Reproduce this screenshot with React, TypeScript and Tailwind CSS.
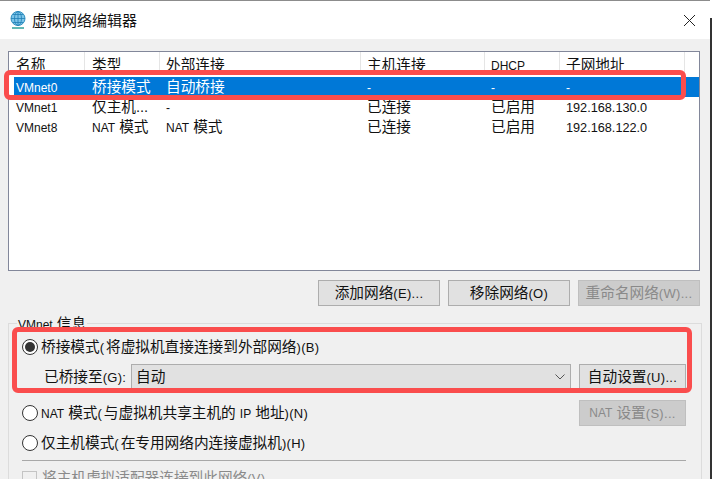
import type { ReactNode } from 'react';

const font = 'font-["Liberation_Sans","Noto_Sans_CJK_SC",sans-serif]';

// latin runs sit smaller than the CJK text, same as the native dialog
function L({ children }: { children: ReactNode }) {
  return <span className="text-[12px]">{children}</span>;
}

// mnemonic suffixes like (B) or (E)... run a bit wider
function Q({ children }: { children: ReactNode }) {
  return <span className="text-[13px] tracking-[0.3px]">{children}</span>;
}

// opening paren of the radio labels has a wide gap after it
function P() {
  return <span className="pr-[2px] text-[13px]">(</span>;
}

function Btn({ children, w, disabled }: { children: ReactNode; w: string; disabled?: boolean }) {
  return (
    <div
      className={`${w} flex h-[26px] shrink-0 items-center justify-center border whitespace-nowrap ${
        disabled ? 'border-[#bfbfbf] bg-[#cccccc] text-[#8a8a8a]' : 'border-[#adadad] bg-[#e1e1e1] text-[#111]'
      }`}
    >
      {children}
    </div>
  );
}

function Radio({ checked }: { checked?: boolean }) {
  return (
    <span className="flex h-[16px] w-[16px] shrink-0 items-center justify-center rounded-full border border-[#333] bg-white">
      {checked && <span className="h-[10px] w-[10px] rounded-full bg-[#333]" />}
    </span>
  );
}

const columns = [
  { label: '名称', cls: 'w-[76px] pl-[7px]' },
  { label: '类型', cls: 'w-[75px] pl-[7px]' },
  { label: '外部连接', cls: 'w-[201px] pl-[6px]' },
  { label: '主机连接', cls: 'w-[124px] pl-[6px]' },
  { label: 'DHCP', cls: 'w-[75px] pl-[6px]' },
  { label: '子网地址', cls: 'w-[125px] pl-[6px]' },
];

const rows = [
  { cells: ['VMnet0', '桥接模式', '自动桥接', '-', '-', '-'], selected: true },
  { cells: ['VMnet1', '仅主机...', '-', '已连接', '已启用', '192.168.130.0'] },
  { cells: ['VMnet8', 'NAT 模式', 'NAT 模式', '已连接', '已启用', '192.168.122.0'] },
];

function Cell({ text }: { text: string }) {
  if (text === 'NAT 模式') {
    return (
      <>
        <L>NAT</L> 模式
      </>
    );
  }
  if (text.startsWith('192.')) return <span className="text-[12.7px]">{text}</span>;
  if (/^[\x00-\x7f]+$/.test(text)) return <L>{text}</L>;
  return <>{text}</>;
}

export default function App() {
  return (
    <div className={`${font} relative flex h-[479px] w-[712px] overflow-hidden bg-white text-[14.67px] leading-none text-[#111]`}>
      <div className="flex h-[480px] w-[710px] shrink-0 flex-col border-t border-[#8c8c8c] bg-[#f0f0f0]">
        <div className="flex h-[38px] shrink-0 items-center bg-white pl-[8px]">
          <svg width="20" height="20" viewBox="0 0 20 20" className="shrink-0">
            <circle cx="10" cy="8.5" r="7" fill="#7cc4e8" stroke="#2f8fc0" />
            <path d="M3 8.5h14M10 1.5v14M5 4.5h10M5 12.5h10" stroke="#1f7fb5" fill="none" strokeWidth="0.8" />
            <ellipse cx="10" cy="8.5" rx="3.5" ry="7" fill="none" stroke="#1f7fb5" strokeWidth="0.8" />
            <path d="M4 18h12" stroke="#3aa6a0" strokeWidth="1.6" />
          </svg>
          <span className="ml-[4px] text-[15px]">虚拟网络编辑器</span>
          <svg width="13" height="13" viewBox="0 0 13 13" className="ml-auto mr-[14px] shrink-0">
            <path d="M1 1l11 11M12 1L1 12" stroke="#222" strokeWidth="1" fill="none" />
          </svg>
        </div>

        <div className="shrink-0 px-[8px] pt-[12px]">
          <div className="h-[220px] w-[692px] overflow-hidden border border-[#82879a] bg-white">
            <div className="flex h-[21px] overflow-hidden">
              {columns.map((c) => (
                <div key={c.label} className={`${c.cls} flex h-[21px] shrink-0 items-center border-r border-[#e5e5e5] pt-[6px]`}>
                  {c.label === 'DHCP' ? <L>{c.label}</L> : c.label}
                </div>
              ))}
            </div>
            <div className="pt-[4px]">
              {rows.map((r) => (
                <div
                  key={r.cells[0]}
                  className={`flex h-[20px] items-center pt-[1px] ${
                    r.selected ? 'bg-[linear-gradient(to_right,#ffffff_5px,#0078d7_5px)] text-white' : ''
                  }`}
                >
                  {r.cells.map((text, i) => (
                    <div key={i} className={`${columns[i].cls} shrink-0 whitespace-nowrap`}>
                      <Cell text={text} />
                    </div>
                  ))}
                </div>
              ))}
            </div>
          </div>
        </div>

        <div className="flex shrink-0 justify-end gap-[8px] pr-[10px] pt-[9px]">
          <Btn w="w-[122px]">添加网络<Q>(E)...</Q></Btn>
          <Btn w="w-[122px]">移除网络<Q>(O)</Q></Btn>
          <Btn w="w-[122px]" disabled>重命名网络<Q>(W)...</Q></Btn>
        </div>

        <div className="relative mx-[8px] mt-[17px] h-[170px] shrink-0 border border-[#dcdcdc] pl-[13px] pr-[15px] pt-[13px]">
          <div className="absolute left-[8px] top-[-7px] bg-[#f0f0f0] px-[1px]">
            <L>VMnet</L> 信息
          </div>
          <div className="flex h-[20px] items-center gap-[3px]">
            <Radio checked />
            <span>桥接模式<P />将虚拟机直接连接到外部网络<Q>)(B)</Q></span>
          </div>
          <div className="mt-[7px] flex items-center">
            <span className="ml-[22px] w-[87px] shrink-0">已桥接至<Q>(G):</Q></span>
            <div className="flex h-[26px] w-[440px] shrink-0 items-center justify-between border border-[#adadad] bg-[#e1e1e1] pl-[4px] pr-[5px]">
              <span>自动</span>
              <svg width="10" height="6" viewBox="0 0 10 6">
                <path d="M0.5 0.5L5 5l4.5-4.5" stroke="#555" fill="none" />
              </svg>
            </div>
            <Btn w="w-[107px] ml-[8px]">自动设置<Q>(U)...</Q></Btn>
          </div>
          <div className="mt-[10px] flex items-center">
            <div className="flex items-center gap-[3px]">
              <Radio />
              <span><L>NAT</L> 模式<P />与虚拟机共享主机的 <L>IP</L> 地址<Q>)(N)</Q></span>
            </div>
            <Btn w="w-[107px] ml-auto" disabled><L>NAT</L>&nbsp;设置<Q>(S)...</Q></Btn>
          </div>
          <div className="mt-[7px] flex h-[20px] items-center gap-[3px]">
            <Radio />
            <span>仅主机模式<P />在专用网络内连接虚拟机<Q>)(H)</Q></span>
          </div>
          <div className="mt-[7px] border-t border-[#a8a8a8]" />
          <div className="mt-[10px] flex items-start gap-[5px] text-[#8a8a8a]">
            <span className="h-[15px] w-[15px] shrink-0 border border-[#c4c4c4]" />
            <span>将主机虚拟适配器连接到此网络<Q>(V)</Q></span>
          </div>
        </div>
      </div>
      <div className="mt-[18px] h-[461px] w-[2px] shrink-0 bg-[#333]" />

      {/* red markup drawn on top of the screenshot */}
      <div className="absolute left-[4px] top-[70px] h-[30px] w-[682px] rounded-[6px] border-[5px] border-[#fa4d4d]" />
      <div className="absolute left-[12px] top-[327px] h-[66px] w-[680px] rounded-[6px] border-[5px] border-[#fa4d4d]" />
    </div>
  );
}
